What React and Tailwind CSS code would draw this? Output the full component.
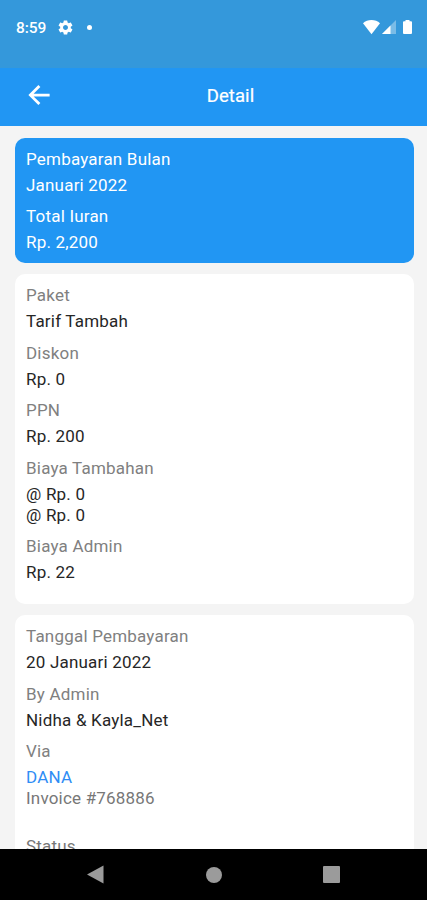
import React from "react";

const labelTones = { white: "text-white", gray: "text-[#808080]" };
const valueTones = { white: "text-white", dark: "text-[#262626]", link: "text-[#2f8df5]" };

function Field({ label, lines, labelTone = "gray", valueTone = "dark", note }) {
  return (
    <div className="flex flex-col gap-[5px]">
      <div className={labelTones[labelTone]}>{label}</div>
      <div className={valueTones[valueTone]}>
        {lines.map((line, i) => (
          <div key={i}>{line}</div>
        ))}
        {note && <div className="text-[#777777]">{note}</div>}
      </div>
    </div>
  );
}

function StatusBar() {
  return (
    <div className="flex h-[68px] shrink-0 items-start bg-[#3498db] pl-4 pr-[15px] pt-[18px] text-white">
      <div className="flex h-5 flex-1 items-center">
        <span className="w-[42px] text-[15.5px] font-medium tracking-[-0.1px]">8:59</span>
        <svg className="-mt-[2px] -ml-px h-[17px] w-[17px]" viewBox="0 0 24 24" fill="currentColor">
          <path d="M19.43 12.98c.04-.32.07-.64.07-.98s-.03-.66-.07-.98l2.11-1.65c.19-.15.24-.42.12-.64l-2-3.46c-.12-.22-.39-.3-.61-.22l-2.49 1c-.52-.4-1.08-.73-1.69-.98l-.38-2.65C14.46 2.18 14.25 2 14 2h-4c-.25 0-.46.18-.49.42l-.38 2.65c-.61.25-1.17.59-1.69.98l-2.49-1c-.23-.09-.49 0-.61.22l-2 3.46c-.13.22-.07.49.12.64l2.11 1.65c-.04.32-.07.65-.07.98s.03.66.07.98l-2.11 1.65c-.19.15-.24.42-.12.64l2 3.46c.12.22.39.3.61.22l2.49-1c.52.4 1.08.73 1.69.98l.38 2.65c.03.24.24.42.49.42h4c.25 0 .46-.18.49-.42l.38-2.65c.61-.25 1.17-.59 1.69-.98l2.49 1c.23.09.49 0 .61-.22l2-3.46c.12-.22.07-.49-.12-.64l-2.11-1.65zM12 15.5c-1.93 0-3.5-1.57-3.5-3.5s1.57-3.5 3.5-3.5 3.5 1.57 3.5 3.5-1.57 3.5-3.5 3.5z" />
        </svg>
        <span className="-mt-[2px] ml-[13px] h-[5px] w-[5px] rounded-full bg-white" />
      </div>
      <svg className="mt-[2px] h-[15px] w-[17px]" viewBox="0 0 17 15" fill="currentColor">
        <path d="M0 3.2C2.3 1.2 5.2 0 8.5 0S14.700 1.200 17 3.200L8.500 14.300Z" />
      </svg>
      <svg className="ml-[2px] mt-[2px] h-[14px] w-[14px]" viewBox="0 0 14 14" fill="currentColor">
        <path d="M14 0V14H0Z" opacity="0.35" />
        <path d="M8.500 5.500V14H0Z" />
      </svg>
      <svg className="ml-[7px] mt-[2px] h-[14px] w-[9px]" viewBox="0 0 9 14" fill="currentColor">
        <path d="M2.500 1.200V0H6.500V1.200H8A1 1 0 0 1 9 2.200V13A1 1 0 0 1 8 14H1A1 1 0 0 1 0 13V2.200A1 1 0 0 1 1 1.200Z" />
      </svg>
    </div>
  );
}

function AppBar() {
  return (
    <header className="grid h-[58px] shrink-0 grid-cols-[60px_1fr_60px] items-center bg-[#2196f3] text-white">
      <svg className="-mt-[4px] ml-[23.500px] h-[30px] w-[30px]" viewBox="0 0 24 24" fill="currentColor">
        <path d="M20.500 10.900H7.700l5.400-5.300L11.500 4 3.500 12l8 8 1.600-1.600L7.700 13.100H20.500z" />
      </svg>
      <h1 className="-mt-[2px] pl-[34px] text-center text-[18.5px] font-normal tracking-[0.1px] [-webkit-text-stroke:0.2px_white]">Detail</h1>
    </header>
  );
}

function NavBar() {
  return (
    <nav className="flex h-[51px] shrink-0 items-center bg-black pl-[87px] text-[#9b9b9b]">
      <svg className="h-[19px] w-[17px]" viewBox="0 0 17 19" fill="currentColor">
        <path d="M16.500 .5V18.500L0 9.500Z" />
      </svg>
      <span className="ml-[102px] h-4 w-4 rounded-full bg-[#9b9b9b]" />
      <span className="ml-[101px] h-[17px] w-[17px] rounded-[1px] bg-[#9b9b9b]" />
    </nav>
  );
}

export default function App() {
  return (
    <div className="flex h-[900px] w-[427px] flex-col overflow-hidden bg-[#f4f4f4] font-[Roboto,sans-serif] text-[17px] leading-[21px]">
      <StatusBar />
      <AppBar />
      <main className="flex min-h-0 flex-1 flex-col gap-[11px] overflow-hidden pl-[14.500px] pr-[13.500px] pt-[12px] tracking-[0.2px]">
        <section className="flex h-[125px] shrink-0 flex-col gap-[10.500px] rounded-[10px] bg-[#2196f3] px-[11.500px] pt-[10.500px]">
          <Field label="Pembayaran Bulan" lines={["Januari 2022"]} labelTone="white" valueTone="white" />
          <Field label="Total Iuran" lines={["Rp. 2,200"]} labelTone="white" valueTone="white" />
        </section>
        <section className="flex h-[330px] shrink-0 flex-col gap-[10.500px] rounded-[10px] bg-white px-[11.500px] pt-[11px]">
          <Field label="Paket" lines={["Tarif Tambah"]} />
          <Field label="Diskon" lines={["Rp. 0"]} />
          <Field label="PPN" lines={["Rp. 200"]} />
          <Field label="Biaya Tambahan" lines={["@ Rp. 0", "@ Rp. 0"]} />
          <Field label="Biaya Admin" lines={["Rp. 22"]} />
        </section>
        <section className="flex shrink-0 flex-col gap-[10.500px] rounded-[10px] bg-white px-[11.500px] pb-10 pt-[11px]">
          <Field label="Tanggal Pembayaran" lines={["20 Januari 2022"]} />
          <Field label="By Admin" lines={["Nidha & Kayla_Net"]} />
          <Field label="Via" lines={["DANA"]} valueTone="link" note="Invoice #768886" />
          <div className="pt-4 text-[#777777]">Status</div>
        </section>
      </main>
      <NavBar />
    </div>
  );
}
